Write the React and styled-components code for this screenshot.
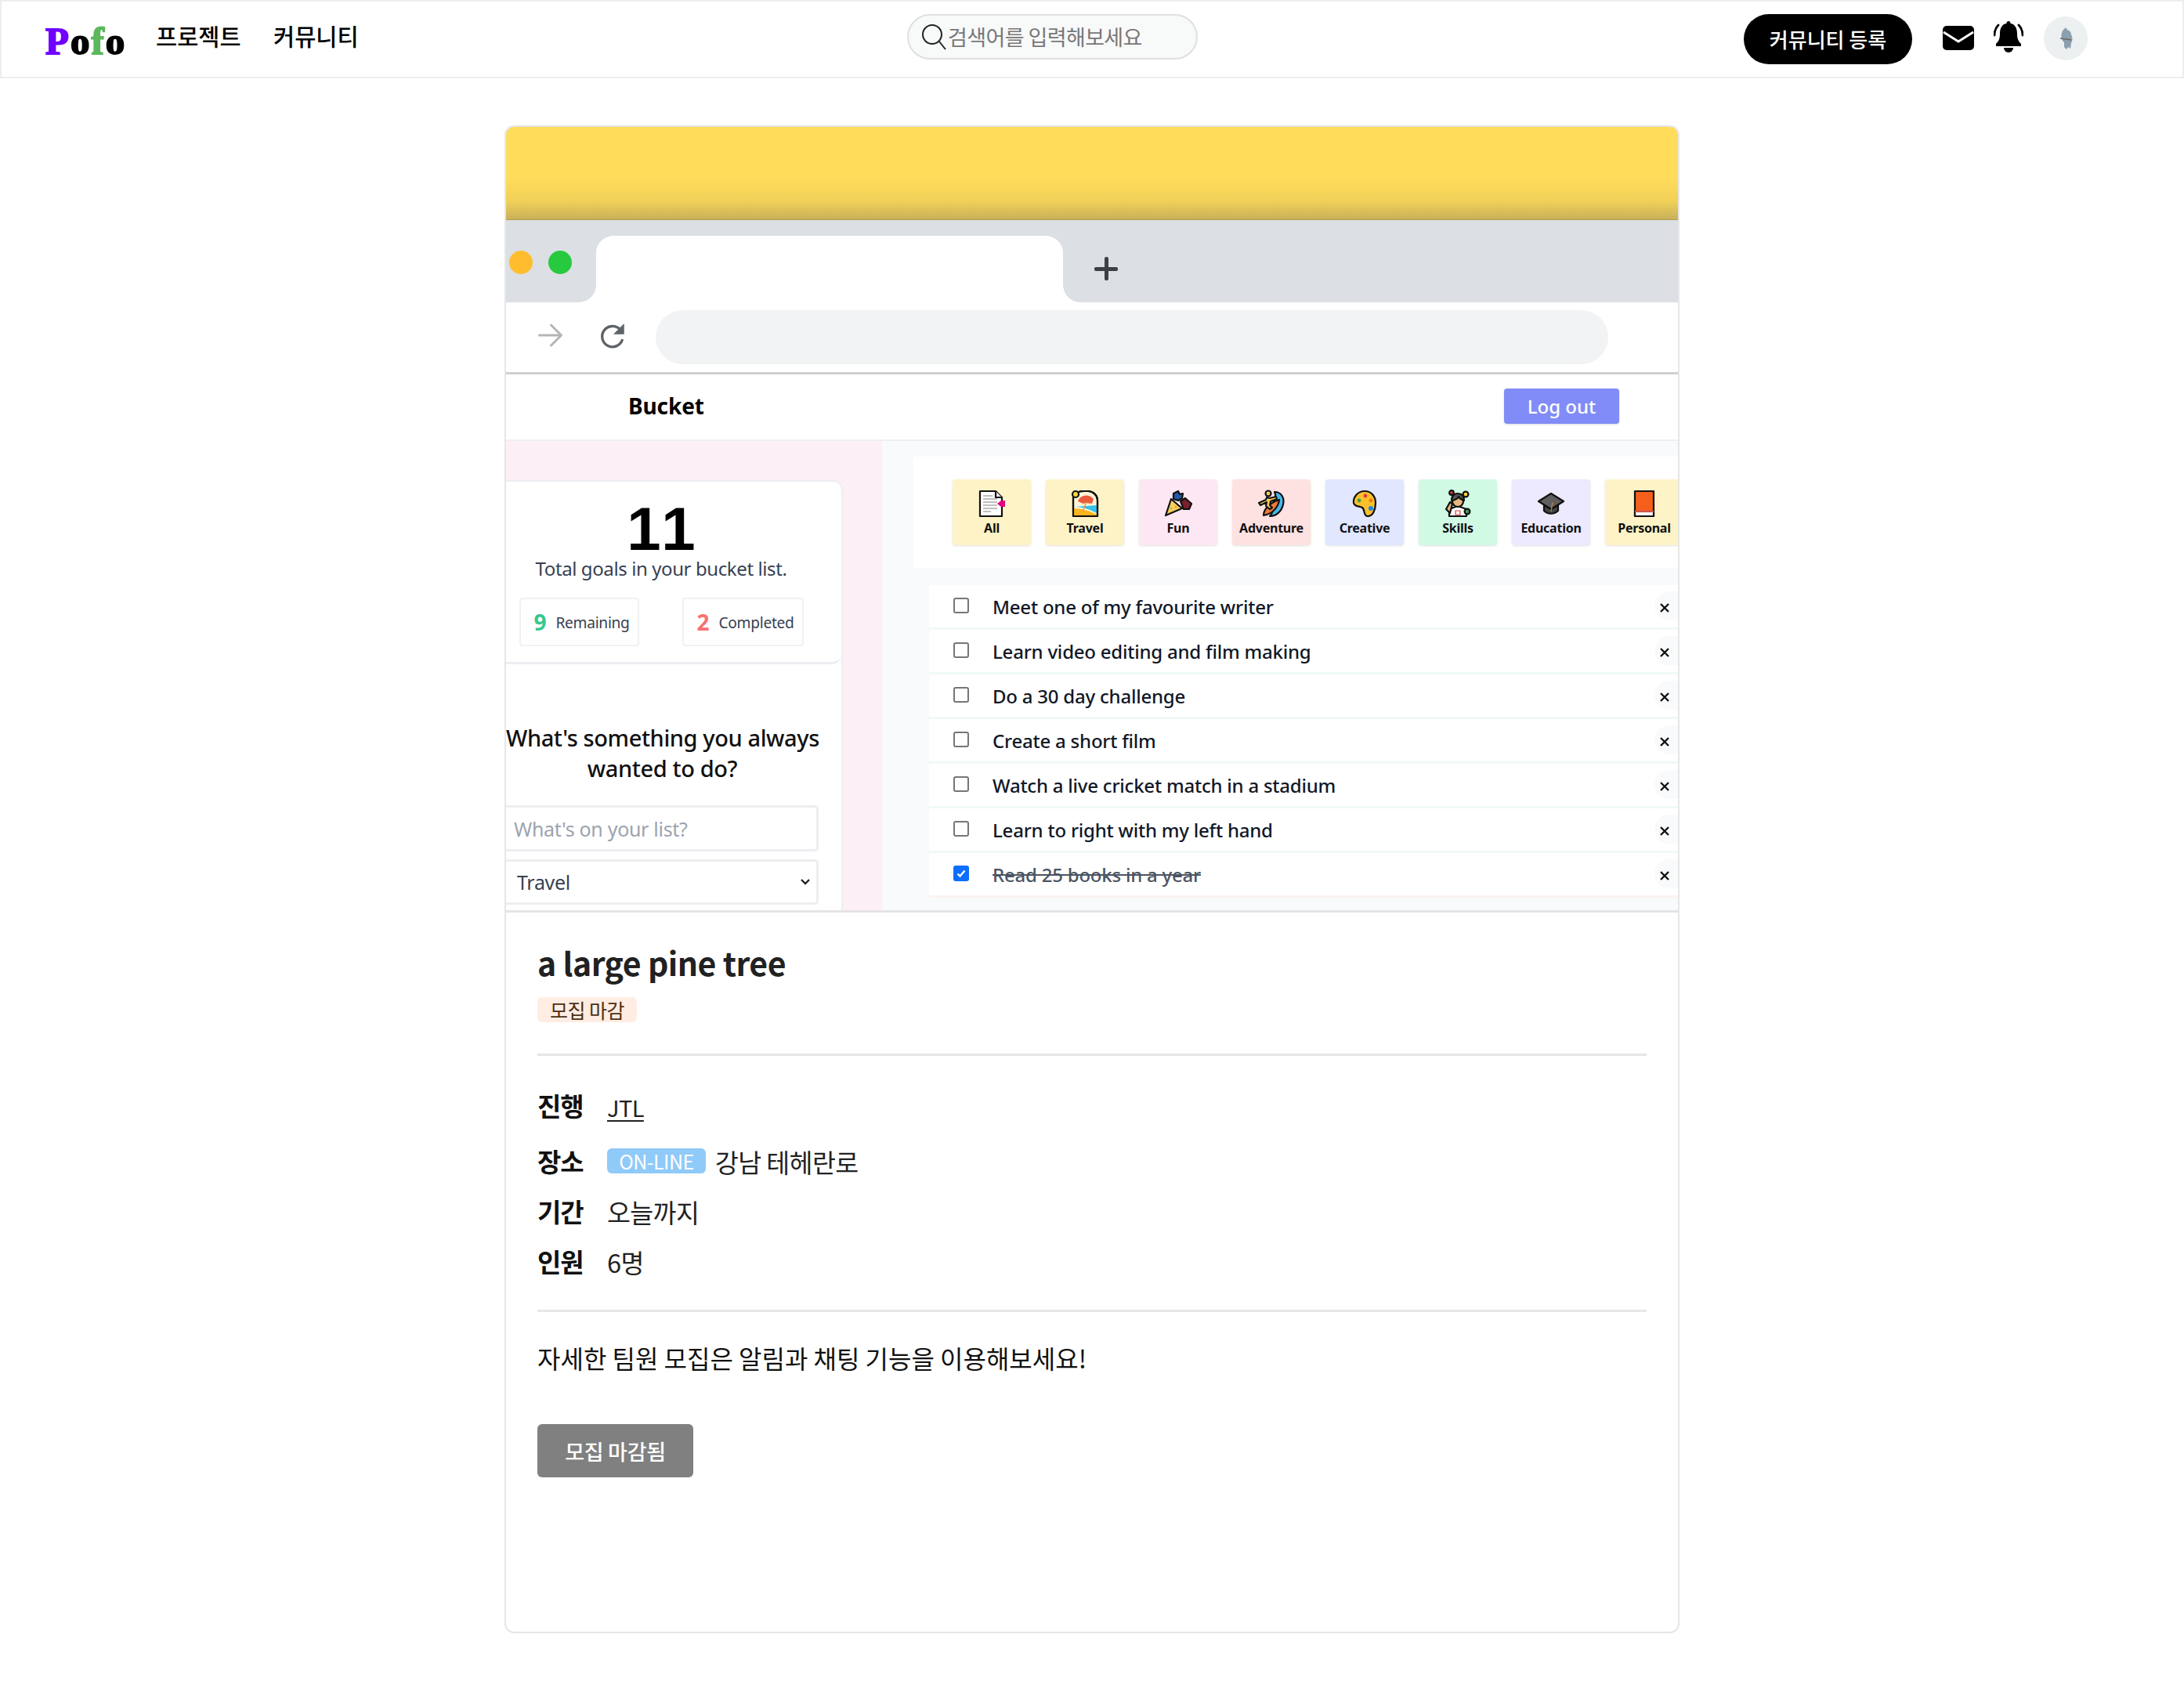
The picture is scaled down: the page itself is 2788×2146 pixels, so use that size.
import React from "react";
import styled, { createGlobalStyle } from "styled-components";

const Global = createGlobalStyle`
  html, body { margin: 0; padding: 0; background: #fff; }
  * { box-sizing: border-box; }
  body { font-family: "Noto Sans CJK KR", "Noto Sans", sans-serif; color: #000; }
`;
const Page = styled.div`width: 2788px; height: 2146px; overflow: hidden; background: #fff;`;

const Nav = styled.header`
  height: 100px; border: 2px solid #eee;
  display: flex; align-items: center; padding: 0 121px 0 56px; position: relative;
`;
const Logo = styled.div`
  font-family: "Liberation Serif", serif; font-weight: 700; font-size: 49px; line-height: 1;
  -webkit-text-stroke: 1.8px currentColor; width: 141px; letter-spacing: 2px; margin-top: 4px;
`;
const LogoPart = styled.span`color: ${p => p.$c};`;
const NavLink = styled.a`font-size: 29.5px; font-weight: 500; width: 150px; line-height: 1; margin-top: -8px;`;
const Search = styled.div`
  position: absolute; left: 1156px; top: 16px; width: 371px; height: 58px; border-radius: 29px;
  background: #f8f9f9; border: 2px solid #e0e0e0; display: flex; align-items: center; padding-left: 16px; gap: 2px;
`;
const SearchText = styled.span`font-size: 27px; color: #777; line-height: 1; letter-spacing: -.6px; margin-top: -2px;`;
const NavRight = styled.div`margin-left: auto; display: flex; align-items: center;`;
const PostBtn = styled.button`
  width: 215px; height: 64px; border: 0; border-radius: 32px; background: #000; color: #fff;
  font: 500 26px "Noto Sans CJK KR", sans-serif; margin-right: 39px; padding-bottom: 3px;
`;
const IconSlot = styled.span`display: flex; width: ${p => p.$w}px; color: #000; margin-top: -4px;`;
const Avatar = styled.div`
  width: 56px; height: 56px; border-radius: 50%; background: #ecf0f1; display: flex; align-items: center; justify-content: center; margin-top: -2px;
`;

const Card = styled.main`
  width: 1500px; height: 1925px; margin: 60px 0 0 644px; border: 2px solid #e6e6e6; border-radius: 12px; overflow: hidden; background: #fff;
`;
const Banner = styled.div`
  height: 119px; background: linear-gradient(180deg, #ffdc5a 0%, #ffdc5a 55%, #f0d058 80%, #c9b05a 99%, #a8934a 100%);
`;
const TabBar = styled.div`height: 105px; background: #dcdfe3; display: flex; position: relative;`;
const Dots = styled.div`display: flex; gap: 20px; width: 115px; padding: 39px 0 0 4px;`;
const Dot = styled.span`width: 30px; height: 30px; border-radius: 50%; background: ${p => p.$c};`;
const Tab = styled.div`width: 596px; margin-top: 20px; background: #fff; border-radius: 22px 22px 0 0; position: relative;
  &::before, &::after { content: ""; position: absolute; bottom: 0; width: 22px; height: 22px; }
  &::before { left: -22px; background: radial-gradient(circle at 0 0, #dcdfe3 21.5px, #fff 22px); }
  &::after { right: -22px; background: radial-gradient(circle at 100% 0, #dcdfe3 21.5px, #fff 22px); }
`;
const Plus = styled.div`
  margin: 47px 0 0 40px; width: 30px; height: 30px; position: relative;
  &::before { content: ""; position: absolute; left: 0; right: 0; top: 12.5px; height: 5px; background: #3c4043; border-radius: 2px; }
  &::after { content: ""; position: absolute; top: 0; bottom: 0; left: 12.5px; width: 5px; background: #3c4043; border-radius: 2px; }
`;
const Toolbar = styled.div`
  height: 92px; background: #fff; border-bottom: 3px solid #d0d0d2; display: flex; align-items: flex-start; padding: 10px 0 0 39px;
`;
const ToolIcon = styled.span`display: flex; width: ${p => p.$w}px; margin-top: 15px;`;
const Address = styled.div`width: 1216px; height: 69px; background: #f1f3f4; border-radius: 35px;`;
const AppBar = styled.div`
  height: 85px; background: #fff; border-bottom: 2px solid #eef0f3; display: flex; align-items: center; padding: 0 75px 0 156px; justify-content: space-between;
`;
const Brand = styled.div`font: 700 28px "Noto Sans", sans-serif; color: #000; margin-top: -4px; letter-spacing: -.1px;`;
const Logout = styled.button`
  width: 147px; height: 45px; background: #818cf8; color: #fff; border: 0; border-radius: 4px; font: 500 24px "Noto Sans", sans-serif; box-shadow: 0 1px 3px rgba(0,0,0,.15); margin-top: -2px;
`;
const Shot = styled.div`display: flex; border-bottom: 3px solid #e4e4e4; overflow: hidden; background: #f8fafc; height: 602px;`;
const Side = styled.div`width: 480px; flex: none; background: #fcf0f6; padding-top: 50px;`;
const SideCard = styled.div`
  width: 430px; height: 1000px; background: #fff; border: 2px solid #eceef2; border-left: 0; border-radius: 0 12px 0 0;
`;
const Totals = styled.div`
  height: 233px; border-bottom: 3px solid #eceef2; border-radius: 0 0 12px 0; text-align: center; padding-right: 32px;
`;
const Big = styled.div`font: 700 78px/59px "Liberation Sans", sans-serif; letter-spacing: 5px; padding: 31px 0 0 5px; height: 90px;`;
const TotalText = styled.div`font: 400 24px/34px "Noto Sans", sans-serif; color: #374151; letter-spacing: -.4px; padding-top: 4px;`;
const Stats = styled.div`display: flex; padding: 20px 0 0 17px; gap: 55px; width: 430px;`;
const Stat = styled.div`
  width: ${p => p.$w}px; height: 62px; border: 2px solid #f0f1f4; border-radius: 4px; display: flex; align-items: center; justify-content: center; gap: 12px; padding-left: 6px;
`;
const StatNum = styled.span`font: 700 28px "Noto Sans", sans-serif; color: ${p => p.$c};`;
const StatLabel = styled.span`font: 400 19.2px "Noto Sans", sans-serif; color: #374151; letter-spacing: -.3px;`;
const Form = styled.div`width: 399px; padding-top: 74px; text-align: center;`;
const Ask = styled.div`font: 500 29px/39px "Noto Sans", sans-serif; color: #111; letter-spacing: -.4px; margin-bottom: 28px; white-space: nowrap;`;
const Field = styled.div`
  height: ${p => p.$h}px; border: 3px solid #edeef1; border-left: 0; border-radius: 0 5px 5px 0; margin-bottom: ${p => p.$mb}px; display: flex; align-items: center; justify-content: space-between;
  padding-left: ${p => p.$pl}px; padding-right: 8px; font: 400 25px "Noto Sans", sans-serif; color: ${p => p.$c}; letter-spacing: -.3px;
`;

const Main = styled.div`flex: 1; padding-top: 20px; padding-left: 40px;`;
const Cats = styled.div`height: 142px; background: #fff; display: flex; gap: 19px; padding: 29px 0 0 50px; overflow: hidden;`;
const Cat = styled.div`
  width: 100px; height: 84px; flex: none; background: ${p => p.$c}; border-radius: 4px; box-shadow: 0 1px 3px rgba(0,0,0,.12);
  display: flex; flex-direction: column; align-items: center; padding-top: 13px; font: 700 16px/20px "Noto Sans", sans-serif; color: #111; letter-spacing: -.25px; white-space: nowrap;
`;
const CatIcon = styled.svg`width: 36px; height: 36px; flex: none; margin-bottom: 3px;`;
const List = styled.div`padding-left: 20px; padding-top: 22px;`;
const Row = styled.div`
  height: 57px; background: #fff; border-bottom: 3px solid ${p => p.$done ? "#fdf2f2" : "#eefaf6"}; display: flex; align-items: center; padding-left: 31px; position: relative;
`;
const Box = styled.span`
  width: 20px; height: 20px; flex: none; border-radius: 3px; border: ${p => p.$on ? "0" : "2px solid #767676"}; background: ${p => p.$on ? "#0d6efd" : "#fff"};
  display: flex; align-items: center; justify-content: center; color: #fff; margin-top: -2px;
`;
const ItemText = styled.span`
  margin-left: 30px; font: 500 24px "Noto Sans", sans-serif; color: ${p => p.$done ? "#4b5563" : "#111827"}; letter-spacing: -.22px; margin-top: 1px;
  text-decoration: ${p => p.$done ? "line-through" : "none"};
`;
const Close = styled.span`
  position: absolute; right: 0; top: 8px; width: 37px; height: 37px; border-radius: 50% 0 0 50%; background: #f9fafb; display: flex; align-items: center; padding-left: 5px; padding-top: 5px;
`;

const Detail = styled.section`padding: 33px 40px 0 40px;`;
const Title = styled.h1`font: 700 41px/60px "Noto Sans CJK KR", sans-serif; margin: 0; color: #212121; letter-spacing: -.5px;`;
const Tag = styled.span`
  display: inline-flex; align-items: center; justify-content: center; width: 127px; height: 32px; margin-top: 15px; background: #ffede4; border-radius: 6px; color: #4e2f12; font: 400 25px "Noto Sans CJK KR", sans-serif; letter-spacing: -.5px;
`;
const Rule = styled.hr`border: 0; height: 3px; background: #e6e6e6; margin: ${p => p.$m};`;
const Info = styled.div`display: flex; align-items: center; height: ${p => p.$h}px; margin-top: ${p => p.$t || 0}px;`;
const Label = styled.span`font: 700 33px "Noto Sans CJK KR", sans-serif; width: 89px; letter-spacing: -1px; color: #111; flex: none;`;
const Value = styled.span`font: 400 32.5px "Noto Sans CJK KR", sans-serif; color: #222; letter-spacing: -.6px;`;
const Owner = styled(Value)`text-decoration: underline; text-underline-offset: 4px; margin-top: 3px; font-size: 29px;`;
const Online = styled.span`
  display: inline-flex; align-items: center; justify-content: center; width: 126px; height: 32px; background: #90caf9; border-radius: 6px; color: #fff; font: 400 25px "Noto Sans CJK KR", sans-serif; margin-right: 12px; letter-spacing: -.5px;
`;
const Para = styled.p`font: 400 32px/46px "Noto Sans CJK KR", sans-serif; margin: 35px 0 0; letter-spacing: 0; color: #111;`;
const Closed = styled.button`
  display: block; width: 199px; height: 68px; margin-top: 62px; border: 0; border-radius: 6px; background: #808080; color: #fff; font: 500 27px "Noto Sans CJK KR", sans-serif; letter-spacing: -.3px;
`;

const Svg = ({ children }) => <CatIcon viewBox="0 0 36 36" stroke="#111" strokeWidth="2.2" strokeLinejoin="round">{children}</CatIcon>;
const icons = {
  All: <Svg><path d="M3 2h20l8 8v24H3z" fill="#fff"/><path d="M7 8h12M7 12h18M7 16h18M7 20h18M7 24h18M7 28h10" stroke="#aaa" strokeWidth="1.3" fill="none"/><path d="M23 2v8h8" fill="#e8e8e8"/><path d="M35 14v8h-5l-5-4 5-4z" fill="#e6007e" stroke="none"/></Svg>,
  Travel: <Svg><path d="M3 34V9c4-6 8-7 14-7h5c6 0 12 5 12 12v20z" fill="#fff5d8"/><path d="M4 22c8 0 15 1 29 8v-10z" fill="#35c0ee" stroke="none"/><path d="M3.500 24c10 0 20 3 30 8v2H3.500z" fill="#fbb51c" stroke="none"/><path d="M3 34V9c4-6 8-7 14-7h5c6 0 12 5 12 12v20z" fill="none"/><path d="M9 15c2-7 13-11 20-3l-2 6-8-1-3 1z" fill="#ef5a3c" stroke="none"/><path d="M20 16l-5 12" stroke="#e3a24a" strokeWidth="1.6"/><circle cx="6" cy="6" r="4" fill="#fdd835"/></Svg>,
  Fun: <Svg><path d="M2 33l7-21 14 12z" fill="#f7cd58"/><path d="M12 5l6-3 2 4 4-1-1 6-5 3-6-2z" fill="#2459a5"/><path d="M21 15l6-4 8 7-3 7-7 0z" fill="#7a1f2c"/><circle cx="9" cy="24" r="1" fill="#3db2a0" stroke="none"/><circle cx="15" cy="22" r="1" fill="#ef6c3a" stroke="none"/></Svg>,
  Adventure: <Svg><path d="M22 3c9 0 13 8 11 16-2 9-9 15-17 15 4-4 5-10 3-15 3-5 6-10 3-16z" fill="#47b9e8"/><path d="M8 33c0-8 8-16 20-20-1 9-8 18-20 20z" fill="#ef7b3a"/><circle cx="14" cy="5" r="3.500" fill="#f7cd58"/><path d="M2 17l9-4 1-3 4 1 8-2 1 3-8 3-1 5 3 3-3 2-5-4 1-5-8 4z" fill="#f7cd58"/></Svg>,
  Creative: <Svg><path d="M18 2c9 0 14 7 14 15s-3 17-10 17c-6 0-3-8-7-11-4-2-10-1-11-6C3 9 10 2 18 2z" fill="#fbc02d"/><circle cx="11" cy="14" r="2.400" fill="#43a047" stroke="none"/><circle cx="19" cy="8" r="2.400" fill="#e53935" stroke="none"/><circle cx="26" cy="14" r="2.400" fill="#f57c00" stroke="none"/><circle cx="26" cy="24" r="3" fill="#1e88e5" stroke="none"/></Svg>,
  Skills: <Svg><path d="M7 34v-9l11-4 11 4v9z" fill="#fff"/><circle cx="18" cy="15" r="7" fill="#e9b77c"/><path d="M10 14c0-7 4-9 8-9s8 2 8 9c-3-1-6-3-7-5-1 3-6 5-9 5z" fill="#555"/><circle cx="10" cy="4" r="2.800" fill="#e53935"/><circle cx="28" cy="6" r="3.400" fill="#fdd835"/><circle cx="30" cy="28" r="3.400" fill="#43a047"/><path d="M3 25l5-9 3 2-3 12z" fill="#e9b77c"/><path d="M15 27h6v5h-6z" fill="none" stroke="#e53935" strokeWidth="1.2"/></Svg>,
  Education: <Svg><path d="M18 5l16 10-16 10L2 15z" fill="#5f5f5f"/><path d="M9 20v7c5 5 13 5 18 0v-7l-9 5z" fill="#444"/><path d="M20 16l-2 12" stroke="#b08b3c" strokeWidth="1.3"/></Svg>,
  Personal: <Svg><path d="M6 2h24v32H6z" fill="#f4601a"/><path d="M6 28h24v6H6z" fill="#fff"/><path d="M6 28h24" stroke="#c55"/></Svg>,
};
const cats = [["All","#fef3c7"],["Travel","#fef3c7"],["Fun","#fce7f3"],["Adventure","#fee2e2"],["Creative","#e0e7ff"],["Skills","#d1fae5"],["Education","#ede9fe"],["Personal","#fef3c7"]];
const items = ["Meet one of my favourite writer","Learn video editing and film making","Do a 30 day challenge","Create a short film","Watch a live cricket match in a stadium","Learn to right with my left hand","Read 25 books in a year"];

const X = () => <svg width="16" height="16" viewBox="0 0 16 16"><path d="M3 3l10 10M13 3L3 13" stroke="#111" strokeWidth="2.4"/></svg>;
const Check = () => <svg width="16" height="16" viewBox="0 0 16 16" fill="none"><path d="M3.500 8.500l3 3 6-7" stroke="#fff" strokeWidth="2.4"/></svg>;
const MailIcon = () => <svg width="40" height="31" viewBox="0 0 40 31"><rect width="40" height="31" rx="5" fill="#000"/><path d="M1 8l19 12L39 8" fill="none" stroke="#fff" strokeWidth="3"/></svg>;
const BellIcon = () => <svg width="38" height="42" viewBox="0 0 38 42"><path d="M19 0a2.500 2.500 0 0 1 2.500 3C28 4 30 10 30 16c0 7 2 10 5 13v3H3v-3c3-3 5-6 5-13C8 10 10 4 16.500 3A2.500 2.500 0 0 1 19 0z" fill="#000"/><path d="M13 34h12a6 6 0 0 1-12 0z" fill="#000"/><path d="M6 5C2 9 1 13 1 18M32 5c4 4 5 8 5 13" fill="none" stroke="#000" strokeWidth="2.800" strokeLinecap="round"/></svg>;
const SearchIcon = () => <svg width="32" height="34" viewBox="0 0 32 34" fill="none" stroke="#222" strokeWidth="2"><circle cx="14" cy="14" r="12"/><path d="M23 23l8 10"/></svg>;

export default function App() {
  return (
    <Page>
      <Global />
      <Nav>
        <Logo><LogoPart $c="#7000ff">P</LogoPart><LogoPart $c="#000">o</LogoPart><LogoPart $c="#5cb85c">f</LogoPart><LogoPart $c="#000">o</LogoPart></Logo>
        <NavLink>프로젝트</NavLink>
        <NavLink>커뮤니티</NavLink>
        <Search><SearchIcon /><SearchText>검색어를 입력해보세요</SearchText></Search>
        <NavRight>
          <PostBtn>커뮤니티 등록</PostBtn>
          <IconSlot $w={65}><MailIcon /></IconSlot>
          <IconSlot $w={64}><BellIcon /></IconSlot>
          <Avatar>
            <svg width="20" height="30" viewBox="0 0 20 30"><path d="M7 4l3-3 2 3c3 1 5 3 5 6 2 4 2 8 0 11l-1 7-3-2-2 3-3-3v-6c-4-3-5-11-1-16z" fill="#8aa0b0"/><path d="M3 15l14 2" stroke="#6d6560" strokeWidth="1.500"/></svg>
          </Avatar>
        </NavRight>
      </Nav>
      <Card>
        <Banner />
        <TabBar>
          <Dots><Dot $c="#ffbd2e" /><Dot $c="#27c93f" /></Dots>
          <Tab />
          <Plus />
        </TabBar>
        <Toolbar>
          <ToolIcon $w={79}>
            <svg width="35" height="34" viewBox="0 0 34 34" fill="none" stroke="#b4b5b7" strokeWidth="3" strokeLinecap="round" strokeLinejoin="round"><path d="M3 17h27M18 4l13 13-13 13" /></svg>
          </ToolIcon>
          <ToolIcon $w={73}>
            <svg width="38" height="38" viewBox="0 0 36 36" fill="none"><path d="M29 21a12.500 12.500 0 1 1-3-12" stroke="#5f6368" strokeWidth="3.200"/><path d="M31 2v13H18z" fill="#5f6368"/></svg>
          </ToolIcon>
          <Address />
        </Toolbar>
        <AppBar><Brand>Bucket</Brand><Logout>Log out</Logout></AppBar>
        <Shot>
          <Side>
            <SideCard>
              <Totals>
                <Big>11</Big>
                <TotalText>Total goals in your bucket list.</TotalText>
                <Stats>
                  <Stat $w={153}><StatNum $c="#34c88f">9</StatNum><StatLabel>Remaining</StatLabel></Stat>
                  <Stat $w={155}><StatNum $c="#f87171">2</StatNum><StatLabel>Completed</StatLabel></Stat>
                </Stats>
              </Totals>
              <Form>
                <Ask>What's something you always<br />wanted to do?</Ask>
                <Field $h={59} $mb={10} $pl={10} $c="#9ca3af">What's on your list?</Field>
                <Field $h={58} $mb={0} $pl={14} $c="#374151">Travel
                  <svg width="12" height="8" viewBox="0 0 12 8"><path d="M1 1l5 5 5-5" fill="none" stroke="#222" strokeWidth="2.400"/></svg>
                </Field>
              </Form>
            </SideCard>
          </Side>
          <Main>
            <Cats>
              {cats.map(([n, c]) => <Cat key={n} $c={c}>{icons[n]}{n}</Cat>)}
            </Cats>
            <List>
              {items.map((t, i) => {
                const done = i === 6;
                return (
                  <Row key={t} $done={done}>
                    <Box $on={done}>{done && <Check />}</Box>
                    <ItemText $done={done}>{t}</ItemText>
                    <Close><X /></Close>
                  </Row>
                );
              })}
            </List>
          </Main>
        </Shot>
        <Detail>
          <Title>a large pine tree</Title>
          <Tag>모집 마감</Tag>
          <Rule $m="40px 0 36px" />
          <Info $h={54} $t={4}><Label>진행</Label><Owner>JTL</Owner></Info>
          <Info $h={64} $t={12}><Label>장소</Label><Online>ON-LINE</Online><Value>강남 테헤란로</Value></Info>
          <Info $h={64}><Label>기간</Label><Value>오늘까지</Value></Info>
          <Info $h={64}><Label>인원</Label><Value>6명</Value></Info>
          <Rule $m="30px 0 0" />
          <Para>자세한 팀원 모집은 알림과 채팅 기능을 이용해보세요!</Para>
          <Closed>모집 마감됨</Closed>
        </Detail>
      </Card>
    </Page>
  );
}
